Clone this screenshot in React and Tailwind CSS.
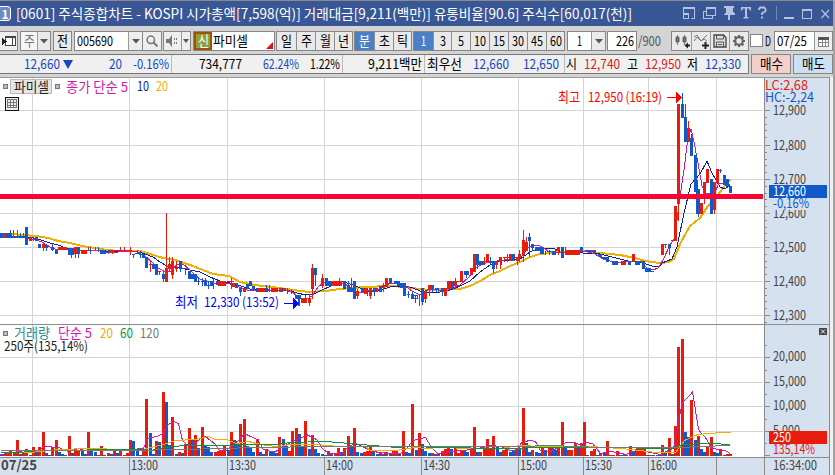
import React, { useLayoutEffect, useRef } from "react";

const RED = "#e81c0c";
const BLUE = "#1159c9";
const MAGENTA = "#d617ae";
const NAVY = "#0a249c";
const GOLD = "#efae00";
const GREEN = "#0a963c";
const GRAY = "#777777";
const FONT = "'Noto Sans CJK KR', 'Liberation Sans', sans-serif";

/* Text squeezed or stretched horizontally to a fixed advance width. */
function Fit({ w, className = "", children }) {
  const ref = useRef(null);
  useLayoutEffect(() => {
    const el = ref.current;
    el.style.transform = "none";
    const natural = el.getBoundingClientRect().width;
    if (natural) el.style.transform = `scaleX(${w / natural})`;
  }, [w, children]);
  return (
    <span className={`block shrink-0 leading-none ${className}`} style={{ width: w }}>
      <span ref={ref} className="inline-block origin-left whitespace-pre">{children}</span>
    </span>
  );
}

/* ---------- data: segments are sampled at three units per pixel ---------- */
const volumes = [
  { ox: 0, base: 408, bars: "0b405 9r402 18r396 27r392 39r400 48r360 57b402 66r396 75r388 87b404 96r381 105b394 114r381 126r336 135b399 144b404 153r382 165r360 174b396 183b402 192b404 204r348 213b399 222r384 231r394 243b394 252b402 261r336 270b390 281b395 290r404 300r378 309b404 320r400 330b401 339r387 348b398 357r394 369r404 378r398 387r360 396b363 408b394 417b404 426r394 435r237 447b339 456b402 465r363 474b366 486r216 495b246 504b375 513r291 525b402 534r396 543b400 552r372 564r324 573b360 582r345 591b384 603r321 612b378 621b381" },
  { ox: 210, base: 228, bars: "0b216 12r216 21r213 30r212 39r196 50b210 60r156 69b180 78b190 87r132 99r117 108b198 117b205 126b216 138r177 147b216 156b222 165r208 177b216 186b214 195b218 204r171 216b177 225b198 234r212 243r153 255r144 264b162 273b199 282r123 293b207 303r165 312b207 321b219 333b222 342b224 351r213 360b221 372r222 381r204 390b216 399r204 411r168 420b202 429r144 438b216 450b219 459r216 468r212 477r199 486b214 498b222 507r219 516b222 525r216 537b221 546r213 555r210 564b219 576r153 585b216 594b220 603r72 615b210 624r159 633b192 642b213" },
  { ox: 420, base: 228, bars: "24b219 33r219 42b222 51r222 63r213 72r208 81r204 90b206 102r198 111r219 120r210 129b212 138b215 150r204 159r141 168b216 177r216 189r204 198r177 207r204 216r168 228b198 237b216 246r210 255r207 267b216 276b214 285r207 294b205 306r84 315b189 324b216 333r210 345b216 354b219 363r200 372b211 384r200 393b198 402b210 411r198 423r126 432b199 441r210 450r210 462r190 471b202 480r190 489r126 498b225 510r213 519r207 528b224 537r220 549b216 558r183 567r225 576r225 588r213 597b225 606b225 615r225 627r198 636b213 645r207 654r204" },
  { ox: 640, base: 408, bars: "0r384 9r384 18b405 27r404 36b405 48b405 54b403 63r375 72b399 84r354 93b402 102r318 111r81 123r57 132b336 141b352 150r240 162b360 171r348 180b387 189b396 198r381 210r351 219b396 228b399 237r387 249b405 258r402 267r402" },
];

/* candle: [left, width, bodyTop, bodyBottom, wickTop?, wickBottom?, wickX?] */
const candles = [
  { ox: 0, oy: 200,
    b: [[0,9,98,113],[18,18,98,113],[36,39,107,113],[30,3,90,110],[39,3,90,110],[51,3,90,110],[60,3,98,110],[69,3,98,110],[75,9,81,134],[105,9,111,123],[114,9,132,143],[135,9,134,143,131,152],[153,9,142,152,131,152],[165,9,151,164],[204,18,143,164,143,174],[231,9,142,164,142,174],[271,3,142,164],[285,3,142,152],[294,3,142,157],[300,18,151,164],[324,3,151,164],[396,9,162,165,162,173],[405,12,160,163,151,164],[417,9,162,165,154,174],[426,9,162,174],[435,9,172,206],[456,9,192,206],[465,9,192,225],[486,9,222,237,213,246],[537,9,182,206,182,216],[546,9,204,207],[553,9,204,207,204,225],[565,9,213,237],[574,9,222,237],[582,9,222,246],[592,9,243,246,235,255],[602,9,243,246,235,258],[613,9,243,258,234,258],[622,9,254,258,243,267]],
    r: [[9,9,98,113],[87,9,111,123],[99,3,111,123],[126,9,131,142,131,152],[174,27,142,152],[222,9,142,164,142,174],[243,18,151,164],[264,3,142,152],[327,18,151,157,151,164],[345,51,151,154],[360,3,141,154],[372,3,141,154],[390,3,141,164],[446,9,192,195,182,216],[474,9,213,216,213,225],[495,9,204,246,40,246],[505,9,192,206,171,213],[513,9,183,225,171,237],[525,9,204,207,183,216]] },
  { ox: 200, oy: 220,
    b: [[6,3,175,190],[15,3,175,198],[24,3,182,198],[30,9,183,198],[39,3,178,208],[48,9,184,195],[75,4,184,197],[105,9,190,206],[117,9,204,216,204,228],[138,9,192,207],[148,9,183,198],[156,9,198,210],[167,9,204,216],[183,4,204,216],[195,9,204,216,195,216],[207,4,195,216],[231,4,204,216],[245,4,204,216],[261,4,204,222],[273,4,207,222],[285,18,225,237],[295,6,225,257],[312,4,234,248],[342,9,144,164,144,198],[360,9,195,199],[375,9,173,198],[384,9,183,198],[430,9,183,206],[440,9,194,216,182,216],[450,9,204,216,175,216],[459,9,182,237],[483,9,204,216],[501,4,204,228],[520,9,204,216,204,228],[537,9,198,216],[567,9,174,188],[582,9,183,192],[591,9,184,200],[600,9,190,206],[609,9,190,228],[621,9,222,226,212,234],[632,9,222,226,220,234],[642,9,225,228,225,246],[651,3,225,236]],
    r: [[54,23,183,197],[80,22,183,186,173,205,93],[96,9,188,200],[129,9,204,216],[174,9,204,216],[186,9,204,216],[213,9,204,216],[221,9,204,216],[236,9,204,216],[250,9,204,212],[303,9,234,248],[312,9,234,248,225,248],[324,9,234,248,222,258],[333,9,144,206,132,237],[363,9,173,198,163,206],[393,33,183,198,173,198,417],[468,9,213,228,206,237],[491,9,204,222],[507,9,204,228,204,237],[525,9,205,216],[546,9,195,204,190,216],[555,9,174,200]] },
  { ox: 410, oy: 220,
    b: [[3,9,225,237,216,237],[12,9,234,237,225,249],[33,9,204,246,204,256],[45,9,210,214],[63,9,195,207,195,216],[75,9,205,208,205,216],[84,3,205,218],[93,9,204,216,204,228],[123,9,184,207],[162,15,153,165,153,175],[198,9,102,134,102,147],[207,9,122,134],[216,9,122,134],[237,9,123,128,112,137],[246,9,123,147,123,158],[273,3,111,135],[306,9,102,124],[318,9,112,125],[354,9,52,63,39,112],[363,9,72,84,72,94],[375,14,81,93],[390,11,81,103],[405,4,93,105],[411,16,93,96,90,105],[427,12,93,105],[453,9,81,114],[465,4,81,105],[480,9,90,105],[501,9,90,105],[510,9,81,93],[525,24,90,96],[549,9,90,103],[564,12,103,113],[576,12,111,116],[588,9,111,126],[606,18,123,135],[654,9,123,135],[676,15,123,135],[697,9,123,147],[706,9,144,156],[715,16,153,156]],
    r: [[28,3,225,258],[42,9,213,237,213,248],[54,9,195,207,195,228],[102,9,204,228],[111,12,183,206],[132,9,183,198,174,207],[141,9,183,186],[150,9,153,186],[180,9,144,165],[189,9,102,155],[219,9,123,126,111,135],[228,9,102,125],[255,9,123,135,123,147],[267,9,111,126,111,147],[279,9,111,114,111,125],[288,9,111,114,102,125],[297,9,102,124],[317,9,112,125,112,136],[325,9,102,113,90,126],[336,9,60,105,30,126],[345,9,65,93,51,93],[434,9,90,94],[442,9,81,93,81,105],[465,9,90,105],[474,15,90,105],[490,20,90,105],[540,9,90,94],[633,15,123,135],[666,9,102,125],[687,9,123,126],[735,9,144,147]] },
  { ox: 640, oy: 80,
    b: [[6,9,543,567],[15,18,564,576],[33,9,573,576],[84,9,492,504,492,525],[123,9,72,113,39,113,127],[132,9,111,186,72,186],[150,9,173,228,162,228],[162,9,225,336],[171,9,327,402,327,410],[168,6,300,402],[210,9,297,402],[237,9,270,273,267,279],[249,9,285,315],[258,9,297,322],[267,9,318,338]],
    r: [[46,8,564,567],[63,9,492,525],[72,9,492,495,492,503],[93,9,480,483],[102,9,378,483],[111,9,72,372,72,423,115],[141,9,144,186,123,186],[180,9,369,402],[189,9,306,345,306,372],[198,9,267,309],[219,9,306,390,306,402],[228,9,267,309]] },
];

const priceLines = [
  { c: GOLD, w: 2, p: "0,235 12,234 22,235 36,236 48,238 58,241 70,243 82,246 95,248 107,250 118,251 140,251 150,254 163,258 175,260 190,265 203,270 213,274 229,276 240,282 255,285 280,288 300,291 310,292 325,291 340,289 365,287 390,286 405,287 420,289 430,290 445,289 460,289 470,286 482,280 490,275 500,271 510,266 520,262 530,257 540,254 560,252 583,251 600,253 620,255 635,258 645,261 660,263 669,262 674,259 681,242 690,226 700,218 708,206 714,201 720,192 726,184 730,180" },
  { c: NAVY, w: 1, p: "0,237 28,237 38,239 50,243 58,245 66,248 80,250 100,251 135,251 145,254 153,257 160,262 167,266 180,268 190,270 200,272 210,277 220,281 235,284 250,289 270,290 290,291 297,293 306,295 314,294 320,291 333,285 341,281 350,284 358,287 368,292 378,291 390,287 405,286 413,288 420,291 428,293 440,292 450,290 460,286 470,281 480,272 490,265 500,261 520,259 530,252 537,249 553,248 560,252 583,253 600,254 612,257 628,261 640,262 652,266 660,266 662,263 672,259 677,247 684,213 691,184 700,174 707,161 712,173 720,187 725,189 730,185" },
  { c: MAGENTA, w: 1, p: "0,237 28,238 36,240 42,242 50,247 55,249 64,249 75,250 100,251 106,252 118,252 125,251 138,252 146,257 152,262 158,268 164,271 172,271 176,265 183,264 190,270 196,276 200,279 213,283 227,283 233,285 247,290 285,290 292,292 300,298 307,299 312,296 318,287 323,282 335,283 345,284 353,290 360,293 368,291 376,290 384,287 390,283 398,283 405,286 412,291 418,294 422,294 428,289 435,289 444,292 452,288 460,285 468,278 476,268 482,264 490,262 505,260 515,258 522,256 527,249 532,245 540,246 548,251 560,253 575,252 585,251 595,254 603,259 613,262 625,262 640,261 648,269 653,270 658,268 663,260 670,245 675,238 679,203 684,170 688,137 691,129 694,142 698,163 702,186 705,193 710,194 715,192 719,183 723,183 727,186 730,184" },
];

const volumeLines = [
  { c: MAGENTA, p: "0,454 25,450 38,450 44,446 58,447 68,451 78,448 84,450 100,449 112,450 130,449 143,448 147,438 156,436 163,433 168,424 173,421 178,423 182,440 186,444 192,445 200,438 205,436 215,444 219,450 226,450 233,444 238,440 244,433 250,436 257,439 263,449 274,452 281,447 292,441 300,438 306,434 316,439 322,448 328,453 341,453 348,446 355,443 362,446 372,451 388,453 400,453 408,446 412,440 425,437 431,447 437,453 450,451 462,450 472,449 482,447 490,445 500,446 510,450 517,450 521,442 529,440 535,441 540,450 550,451 558,447 565,442 575,442 580,445 584,442 592,443 600,453 610,451 617,452 625,454 632,451 640,450 650,452 660,454 668,450 673,448 678,420 682,402 690,394 692,391 698,429 701,433 705,437 711,448 720,449 727,451 730,454" },
  { c: GOLD, p: "0,452 30,452 58,449 90,448 105,448 112,450 140,450 150,447 163,444 175,440 195,439 208,436 215,439 226,439 236,443 248,441 260,444 275,446 290,444 318,444 325,445 340,446 365,446 370,450 395,450 415,447 425,448 440,447 470,448 500,448 520,445 540,446 560,446 575,447 590,446 620,448 640,450 655,452 675,452 684,440 697,434 720,432 730,432" },
  { c: GREEN, p: "0,452 20,452 35,450 140,449 150,450 164,447 183,445 225,445 250,444 275,444 290,442 325,441 350,443 360,444 385,446 395,447 410,446 440,447 500,448 550,447 580,447 620,447 650,448 672,448 682,444 710,443 730,444" },
  { c: GRAY, p: "0,450 130,450 180,449 225,448 250,447 330,446 420,446 520,446 550,445 600,447 640,447 680,447 700,446 730,445" },
];

const gx = [32, 129, 227, 324, 421, 518, 583, 648, 716];
const gyPrice = [110, 145, 179, 213, 247, 281, 315];
const gyVol = [357, 382, 406, 431];
const px = (v) => Math.round(v / 3);

function Bars() {
  return volumes.flatMap((s, i) =>
    s.bars.split(" ").map((t, j) => {
      const [, x, k, y] = t.match(/(\d+)([rb])(\d+)/);
      const h = Math.max(1, px(s.base - y));
      return <rect key={`${i}-${j}`} x={s.ox + px(x)} y={456 - h} width="3" height={h} fill={k === "r" ? RED : BLUE} />;
    })
  );
}

function Candles() {
  return candles.flatMap((s, i) =>
    ["b", "r"].flatMap((k) =>
      s[k].map(([x, w, t, b, wt, wb, wx], j) => (
        <g key={`${i}${k}${j}`} fill={k === "r" ? RED : BLUE}>
          <rect x={s.ox + px(x)} y={s.oy + px(t)} width={Math.max(1, px(w))} height={Math.max(1, px(b - t))} />
          {wt !== undefined && (
            <rect x={s.ox + (wx ? px(wx) : px(x) + Math.floor(px(w) / 2))} y={s.oy + px(wt)} width="1" height={px(wb - wt)} />
          )}
        </g>
      ))
    )
  );
}

function Label({ x, y, w, c = "#444", size = 13.5, bold, children }) {
  return (
    <text x={x} y={y} fill={c} fontSize={size} fontFamily={FONT} fontWeight={bold ? 700 : 400} textLength={w} lengthAdjust="spacingAndGlyphs">
      {children}
    </text>
  );
}

function Chart() {
  return (
    <svg width="830" height="398" viewBox="0 77 830 398" className="block shrink-0 overflow-visible">
      <g shapeRendering="crispEdges">
        <rect x="0" y="77" width="830" height="398" fill="#fff" />
        <rect x="764" y="77" width="66" height="398" fill="#d6e1ef" />
        <rect x="0" y="458" width="830" height="17" fill="#d6e1ef" />
        {gx.map((x) => <rect key={x} x={x} y="78" width="1" height="379" fill="#d4d4d4" />)}
        {[...gyPrice, ...gyVol].map((y) => <rect key={y} x="0" y={y} width="763" height="1" fill="#d4d4d4" />)}
        <rect x="0" y="77" width="830" height="1" fill="#999" />
        <rect x="0" y="324" width="829" height="1" fill="#8b8b8b" />
        <rect x="0" y="457" width="829" height="1" fill="#8b8b8b" />
        <rect x="764" y="78" width="1" height="397" fill="#8b8b8b" />
        <rect x="829" y="78" width="1" height="397" fill="#8b8b8b" />
        {gx.slice(1).map((x) => <rect key={x} x={x} y="458" width="1" height="17" fill="#8b8b8b" />)}
        {gyPrice.map((y) => <rect key={y} x="765" y={y} width="5" height="1" fill="#8b8b8b" />)}
        {gyPrice.flatMap((y) => [7, 14, 20, 27].map((d) => y + d < 324 && <rect key={`${y}-${d}`} x="765" y={y + d} width="2" height="1" fill="#8b8b8b" />))}
        {[...gyVol, 455].map((y) => (
          <g key={y} fill="#8b8b8b">
            <rect x="765" y={y} width="5" height="1" />
            <rect x="765" y={y - 12} width="2" height="1" />
          </g>
        ))}
        <Bars />
        <g transform="translate(0.5 0.5)">
          {volumeLines.map((l) => <polyline key={l.c} points={l.p} fill="none" stroke={l.c} strokeWidth="1" />)}
        </g>
        {priceLines.map((l) => <polyline key={l.c} points={l.p} fill="none" stroke={l.c} strokeWidth={l.w} />)}
        <Candles />
        <rect x="0" y="194" width="763" height="5" fill="#ff0033" />
        <path d="M667 97h9v-5l6 5.500-6 5.500v-5h-9z" fill="#f00" />
        <path d="M284 303h9v-5l6 5.500-6 5.500v-5h-9z" fill="#00f" />
      </g>

      <Label x="558" y="101.5" w="22" c="#f00">최고</Label>
      <Label x="588" y="101.5" w="74" c="#f00">12,950 (16:19)</Label>
      <Label x="175" y="307" w="23" c="#00e">최저</Label>
      <Label x="204" y="307" w="75" c="#00e">12,330 (13:52)</Label>

      <g shapeRendering="crispEdges">
        <rect x="3.500" y="84.500" width="4" height="4" fill="#bbb" stroke="#777" />
        <rect x="10.500" y="79.500" width="41" height="14" fill="#e5e5e5" stroke="#bbb" />
        <rect x="55.500" y="84.500" width="4" height="4" fill="#bbb" stroke="#777" />
        <rect x="5.500" y="97.500" width="13" height="13" fill="#eee" stroke="#111" />
        <path d="M7.500 99.500h9v8h-9zM7.500 102.500h9M7.500 105.500h9M10.500 99.500v8M13.500 99.500v8" fill="none" stroke="#777" />
        <rect x="3.500" y="331.500" width="4" height="4" fill="#bbb" stroke="#777" />
      </g>
      <Label x="14" y="91.500" w="35" c="#222">파미셀</Label>
      <Label x="66" y="91.500" w="62" c={MAGENTA}>종가 단순 5</Label>
      <Label x="137" y="91" w="12" c={NAVY}>10</Label>
      <Label x="156" y="91" w="12" c={GOLD}>20</Label>

      <Label x="14" y="338" w="36" c="#2d8d92">거래량</Label>
      <Label x="58" y="338" w="34" c={MAGENTA}>단순 5</Label>
      <Label x="100" y="338" w="13" c={GOLD}>20</Label>
      <Label x="120" y="338" w="13" c={GREEN}>60</Label>
      <Label x="140" y="338" w="19" c={GRAY}>120</Label>
      <Label x="4" y="351" w="84" c="#222">250주(135,14%)</Label>

      {gyPrice.map((y, i) => (
        <Label key={y} x="773" y={y + 4.5} w="33">{`12,${9 - i}00`}</Label>
      ))}
      <Label x="765" y="90" w="43" c={RED}>LC:2,68</Label>
      <Label x="765" y="102" w="49" c={BLUE}>HC:-2,24</Label>
      <rect x="770" y="198" width="57" height="12" fill="#d6e1ef" />
      <rect x="769" y="185" width="58" height="13" fill={BLUE} />
      <Label x="773" y="196" w="33" c="#fff">12,660</Label>
      <Label x="773" y="208" w="36" c={BLUE}>-0,16%</Label>

      {["20,000", "15,000", "10,000"].map((t, i) => <Label key={t} x="773" y={gyVol[i] + 4} w="33">{t}</Label>)}
      <Label x="773" y="435" w="27">5,000</Label>
      <rect x="769" y="431" width="58" height="24" fill="#d6e1ef" />
      <rect x="769" y="431" width="58" height="13" fill={RED} />
      <Label x="773" y="442" w="18" c="#fff">250</Label>
      <Label x="773" y="454" w="42" c={RED}>135,14%</Label>
      <rect x="819" y="328" width="8" height="7" fill="#444" />
      <path d="M821 329.500l4 4m0-4l-4 4" stroke="#fff" />

      <Label x="1" y="470" w="36" bold>07/25</Label>
      {["13:00", "13:30", "14:00", "14:30", "15:00", "15:30", "16:00"].map((t, i) => (
        <Label key={t} x={gx[i + 1] + 2} y="470" w="27">{t}</Label>
      ))}
      <Label x="773" y="470" w="44">16:34:00</Label>
    </svg>
  );
}

const Arrow = () => (
  <svg width="8" height="5" viewBox="0 0 8 5" className="shrink-0"><path d="M0 0h8L4 4.500z" fill="#555" /></svg>
);

function Box({ className = "", children }) {
  return <div className={`box-border flex h-5 shrink-0 items-center justify-center border border-[#858585] ${className}`}>{children}</div>;
}

/* A run of joined buttons: each item is [label, box width, text width, active]. */
function Group({ items, className = "" }) {
  return (
    <div className={`flex h-5 shrink-0 border border-[#858585] ${className}`}>
      {items.map(([t, w, tw, on], i) => (
        <div
          key={t}
          className={`flex items-center justify-center ${i ? "border-l border-[#8d8d8d]" : ""} ${on ? "bg-[#4b80c4] text-white" : "bg-[#e9e9e9] text-black"}`}
          style={{ width: w }}
        >
          <Fit w={tw}>{t}</Fit>
        </div>
      ))}
    </div>
  );
}

function TitleBar() {
  return (
    <div className="flex h-[26px] shrink-0 items-center border-t border-[#8a8a8a] bg-[#3a5795] text-white">
      <div className="flex h-[15px] w-[11px] shrink-0 items-center justify-center rounded-r-sm border border-l-0 border-white bg-[#6d8ac4] text-[12px] font-bold leading-none">1</div>
      <Fit w={616} className="mb-px ml-[5px] text-[14px]">[0601] 주식종합차트 - KOSPI 시가총액[7,598(억)] 거래대금[9,211(백만)] 유통비율[90.6] 주식수[60,017(천)]</Fit>
      <svg width="150" height="16" viewBox="683 6 150 16" className="ml-[51px] shrink-0" fill="none" stroke="#b5c3e0" shapeRendering="crispEdges">
        <path d="M683.500 15v-7.500h11v11h-4M683 8h12M683 14h6M683.500 13.500h5v5h-5z" />
        <path d="M706.500 7.500h9v8h-9zM706 8h10M706 11.500h-3v7h9v-3" />
        <path d="M724 6h10v2h-1v4l2 2v1h-11v-1l2-2V8h-2zM728 15h2v5h-2z" fill="#b5c3e0" stroke="none" />
        <path d="M741 7h10v3.500h-1l-1-2h-2V17h1.500v1.500h-5V17H745V8.500h-2l-1 2h-1z" fill="#b5c3e0" stroke="none" shapeRendering="auto" />
        <path d="M759 10V8.800L760.300 7.500h3.700l1.500 1.500v2L762 13.500V15M762 16.500v2" strokeWidth="1.800" shapeRendering="auto" />
        <path d="M776.500 6v14" stroke="#7888ac" />
        <path d="M784 18h10" strokeWidth="2" />
        <path d="M802.500 9.500h9v9h-9zM802 10h10" />
        <path d="M821.500 10l7.500 8m0-8l-7.500 8" shapeRendering="auto" strokeWidth="1.200" />
      </svg>
    </div>
  );
}

function ToolIcon({ kind }) {
  const d = {
    candle: <><path d="M2 4h3v5H2zM9 4h3v5H9z" fill="#555" stroke="#666" /><path d="M3.500 2v10M10.500 2v10" stroke="#777" /><path d="M10.500 12.500L14 9.500v2h2v2h-2v2z" fill="#222" /></>,
    line: <><path d="M1 8l3-4 4 4 6-6M1 4l3-2 4 6 3-2 3 2" stroke="#777" fill="none" /><path d="M12.500 9v7M9 12.500h7" stroke="#222" strokeWidth="2" /></>,
    save: <><path d="M2 2h9.500L14 4.500V14H2z" fill="#ddd" stroke="#444" strokeWidth="1.300" /><path d="M4.500 2v4h7V2M4.500 14V9h7v5M6 11.500h4" fill="none" stroke="#555" /></>,
    gear: <><circle cx="8" cy="8" r="3.800" fill="none" stroke="#666" strokeWidth="2.200" /><path d="M8 2v2M8 12v2M2 8h2M12 8h2M3.600 3.600l1.400 1.400M11 11l1.400 1.400M3.600 12.400L5 11M11 5l1.400-1.400" stroke="#666" strokeWidth="2.200" /></>,
  }[kind];
  return <svg width="16" height="16" viewBox="0 0 16 16">{d}</svg>;
}

function Toolbar() {
  return (
    <div className="flex h-7 shrink-0 items-start bg-[#d4d4d4] pt-[5px]">
      <Box className="w-[18px] border-l-0 bg-[#eee]">
        <svg width="14" height="12" viewBox="0 0 14 12" shapeRendering="crispEdges"><path d="M3.500 1.500h10v9h-10zM3 2.500h11M10.500 3v7" fill="#fff" stroke="#444" /><path d="M0 3l5 3.500L0 10z" fill="#222" /></svg>
      </Box>
      <Box className="ml-0.5 w-[31px] bg-[#f5f5f5] text-[#777]">
        <div className="flex w-4 justify-center"><Fit w={11}>주</Fit></div>
        <div className="flex h-full flex-1 items-center justify-center border-l border-[#999] bg-[#eaeaea]"><Arrow /></div>
      </Box>
      <Box className="ml-0.5 w-[19px] bg-[#e9e9e9]"><Fit w={11}>전</Fit></Box>
      <Box className="ml-0.5 w-[69px] bg-white">
        <Fit w={36} className="ml-0.5">005690</Fit>
        <div className="ml-auto flex h-full w-3.5 items-center justify-center border-l border-[#999] bg-[#eee]"><Arrow /></div>
      </Box>
      <Box className="w-[19px] border-l-0 bg-[#eee]">
        <svg width="12" height="12" viewBox="0 0 12 12" fill="none" stroke="#777"><circle cx="4.800" cy="4.800" r="3.700" strokeWidth="1.500" /><path d="M7.500 7.500L11.500 11.500" strokeWidth="2" /></svg>
      </Box>
      <Box className="ml-px w-7 bg-[#eee]">
        <div className="flex w-[17px] justify-center"><svg width="13" height="12" viewBox="0 0 13 12"><path d="M0 4h3l3-4v12L3 8H0z" fill="#777" /><path d="M8 4h1M10 4h1M8 8h1M10 8h1" stroke="#777" strokeWidth="2" /></svg></div>
        <div className="flex h-full flex-1 items-center justify-center border-l border-[#999]"><svg width="6" height="4" viewBox="0 0 6 4"><path d="M0 0h6L3 4z" fill="#555" /></svg></div>
      </Box>
      <Box className="ml-0.5 w-[82px] bg-white">
        <div className="flex h-[18px] w-[18px] shrink-0 items-center justify-center border-2 border-[#a1500e] bg-[#8fa336] text-white"><Fit w={11}>신</Fit></div>
        <Fit w={35} className="ml-px">파미셀</Fit>
        <svg width="7" height="7" viewBox="0 0 7 7" className="mt-auto mr-px mb-px ml-auto shrink-0"><path d="M7 0v7H0z" fill="#d8101c" /></svg>
      </Box>
      <Group className="ml-px" items={[["일", 19, 11], ["주", 19, 11], ["월", 19, 11], ["년", 18, 11]]} />
      <Group className="ml-px" items={[["분", 19, 11, true], ["초", 19, 11], ["틱", 18, 11]]} />
      <Group className="ml-px" items={[["1", 19, 5, true], ["3", 18, 6], ["5", 19, 6], ["10", 19, 12], ["15", 19, 12], ["30", 19, 12], ["45", 19, 12], ["60", 18, 12]]} />
      <Box className="ml-0.5 w-[39px] bg-white">
        <div className="flex flex-1 justify-center"><Fit w={5}>1</Fit></div>
        <div className="flex h-full w-3.5 items-center justify-center border-l border-[#999] bg-[#eaeaea]"><Arrow /></div>
      </Box>
      <Box className="ml-px w-[30px] justify-end bg-white pr-0.5"><Fit w={18}>226</Fit></Box>
      <div className="ml-px flex h-5 items-center text-[#555]"><Fit w={23}>/900</Fit></div>
      <div className="ml-[10px] flex h-5 shrink-0 border border-[#858585] bg-[#eaeaea]">
        {["candle", "line", "save", "gear"].map((k, i) => (
          <div key={k} className={`flex w-[19px] items-center justify-center ${i ? "border-l border-[#999]" : ""}`}><ToolIcon kind={k} /></div>
        ))}
      </div>
      <div className="ml-px mt-[3px] h-[13px] w-[13px] shrink-0 border border-[#858585] bg-white" />
      <div className="ml-0.5 flex h-5 items-center"><Fit w={6}>D</Fit></div>
      <Box className="ml-[3px] w-[59px] bg-white">
        <Fit w={30} className="ml-0.5">07/25</Fit>
        <div className="ml-auto flex h-full w-[18px] items-center justify-center border-l border-[#999] bg-[#eee]">
          <svg width="11" height="11" viewBox="0 0 11 11" shapeRendering="crispEdges"><path d="M.5 1.500h10v9H.5zM1 6.500h9M4.500 3v7M7.500 3v7" fill="#fff" stroke="#888" /><path d="M0 1h11v3H0z" fill="#555" /></svg>
        </div>
      </Box>
    </div>
  );
}

function Quote() {
  const blue = "text-[#1646c4]";
  const red = "text-[#e0200c]";
  return (
    <div className="flex h-[23px] shrink-0 items-start bg-[#d4d4d4]">
      <div className="flex h-5 w-[749px] shrink-0 items-center border border-l-0 border-[#777] bg-[#f0f0f0]">
        <div className={`flex h-full w-[172px] shrink-0 items-center border-r border-[#bbb] ${blue}`}>
          <Fit w={36} className="ml-6">12,660</Fit>
          <svg width="10" height="9" viewBox="0 0 10 9" className="ml-[3px]"><path d="M0 0h10L5 9z" fill="#1646c4" /></svg>
          <Fit w={13} className="ml-9">20</Fit>
          <Fit w={36} className="ml-[11px]">-0.16%</Fit>
        </div>
        <div className="flex h-full w-[171px] shrink-0 items-center border-r border-[#bbb]">
          <Fit w={43} className="ml-[27px]">734,777</Fit>
          <Fit w={36} className={`ml-[21px] ${blue}`}>62.24%</Fit>
          <Fit w={30} className="ml-[11px]">1.22%</Fit>
        </div>
        <div className="flex h-full w-[82px] shrink-0 items-center justify-end border-r border-[#bbb] pr-0.5"><Fit w={54}>9,211백만</Fit></div>
        <div className={`flex h-full w-[140px] shrink-0 items-center border-r border-[#bbb] ${blue}`}>
          <Fit w={35} className="ml-0.5 text-black">최우선</Fit>
          <Fit w={36} className="ml-[11px]">12,660</Fit>
          <Fit w={36} className="ml-[14px]">12,650</Fit>
        </div>
        <Fit w={11} className="ml-px">시</Fit>
        <Fit w={36} className={`ml-[7px] ${red}`}>12,740</Fit>
        <Fit w={11} className="ml-[7px]">고</Fit>
        <Fit w={36} className={`ml-[7px] ${red}`}>12,950</Fit>
        <Fit w={11} className="ml-[6px]">저</Fit>
        <Fit w={36} className={`ml-[7px] ${blue}`}>12,330</Fit>
      </div>
      <Box className="ml-0.5 w-[40px] bg-[#f5cdca]"><Fit w={23}>매수</Fit></Box>
      <Box className="ml-0.5 w-[40px] bg-[#cbdff5]"><Fit w={23}>매도</Fit></Box>
    </div>
  );
}

export default function App() {
  return (
    <div className="flex h-[475px] w-[835px] overflow-hidden bg-[#d4d4d4] font-['Noto_Sans_CJK_KR','Liberation_Sans',sans-serif] text-[13.5px] leading-none text-black">
      <div className="flex w-[833px] shrink-0 flex-col">
        <TitleBar />
        <Toolbar />
        <Quote />
        <div className="flex flex-1">
          <Chart />
          <div className="flex-1 bg-[#efefef]" />
        </div>
      </div>
      <div className="flex-1 bg-[#a2a2a2]" />
    </div>
  );
}
